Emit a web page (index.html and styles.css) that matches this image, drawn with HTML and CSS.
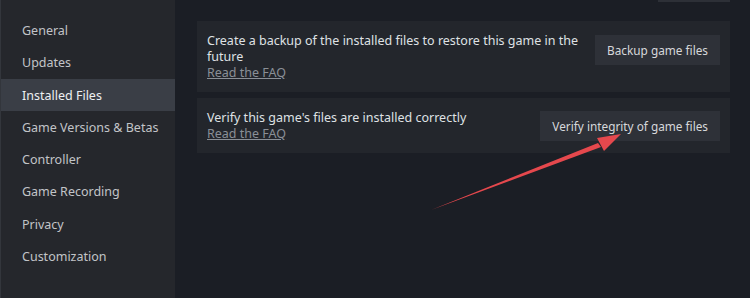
FILE: index.html
```html
<!DOCTYPE html>
<html lang="en">
<head>
    <meta charset="UTF-8">
    <title>Properties - Installed Files</title>
    <link rel="stylesheet" href="styles.css">
</head>
<body>
    <div class="sidebar">
        <div class="nav-item">General</div>
        <div class="nav-item">Updates</div>
        <div class="nav-item active">Installed Files</div>
        <div class="nav-item">Game Versions &amp; Betas</div>
        <div class="nav-item">Controller</div>
        <div class="nav-item">Game Recording</div>
        <div class="nav-item">Privacy</div>
        <div class="nav-item">Customization</div>
    </div>
    <div class="main">
        <div class="top-stub"><div class="stub-btn"></div></div>
        <div class="card card-tall">
            <div class="card-text">
                <div class="desc">Create a backup of the installed files to restore this game in the future</div>
                <a class="faq">Read the FAQ</a>
            </div>
            <button class="btn btn-backup">Backup game files</button>
        </div>
        <div class="card">
            <div class="card-text">
                <div class="desc">Verify this game's files are installed correctly</div>
                <a class="faq">Read the FAQ</a>
            </div>
            <button class="btn btn-verify">Verify integrity of game files</button>
        </div>
    </div>
    <svg class="arrow" width="750" height="298" viewBox="0 0 750 298">
        <polygon points="431,210 598,143 601,147" fill="#e5484d"/>
        <polygon points="621,134 597,138 604,151" fill="#e5484d"/>
    </svg>
</body>
</html>
```

FILE: styles.css
```css
body {
    margin: 0;
    width: 750px;
    height: 298px;
    display: flex;
    font-family: 'Noto Sans', 'Open Sans', sans-serif;
    background-color: #1b1e25;
    overflow: hidden;
}

.sidebar {
    width: 175px;
    padding-top: 14px;
    background-color: #25272c;
    border-left: 1px solid #33363c;
    box-sizing: border-box;
}

.nav-item {
    height: 32.3px;
    line-height: 33px;
    padding-left: 21px;
    font-size: 12.5px;
    color: #c2c4c8;
}

.nav-item.active {
    background-color: #3a3e46;
    color: #eef0f2;
}

.main {
    width: 533px;
    margin-left: 22px;
}

.top-stub {
    height: 21px;
    position: relative;
}

.stub-btn {
    position: absolute;
    right: 0;
    top: 0;
    width: 72px;
    height: 2px;
    background-color: #2d3037;
}

.card {
    display: flex;
    align-items: center;
    justify-content: space-between;
    background-color: #23262c;
    padding: 9px 10px 8px 10px;
    margin-bottom: 6px;
    height: 55px;
    box-sizing: border-box;
}

.card-tall {
    height: 71px;
    align-items: flex-start;
    padding-top: 12px;
}

.card-text {
    width: 378px;
    font-size: 12.5px;
    line-height: 16px;
}

.desc {
    color: #dfe1e4;
}

.faq {
    display: block;
    color: #8a8f96;
    text-decoration: underline;
}

.btn {
    flex-shrink: 0;
    white-space: nowrap;
    font-family: inherit;
    font-size: 11.8px;
    color: #d6d8db;
    background-color: #2e3138;
    border: none;
    height: 30px;
    padding: 0 12px;
}

.btn-backup {
    margin-top: 2px;
}

.arrow {
    position: absolute;
    left: 0;
    top: 0;
    pointer-events: none;
}
```
